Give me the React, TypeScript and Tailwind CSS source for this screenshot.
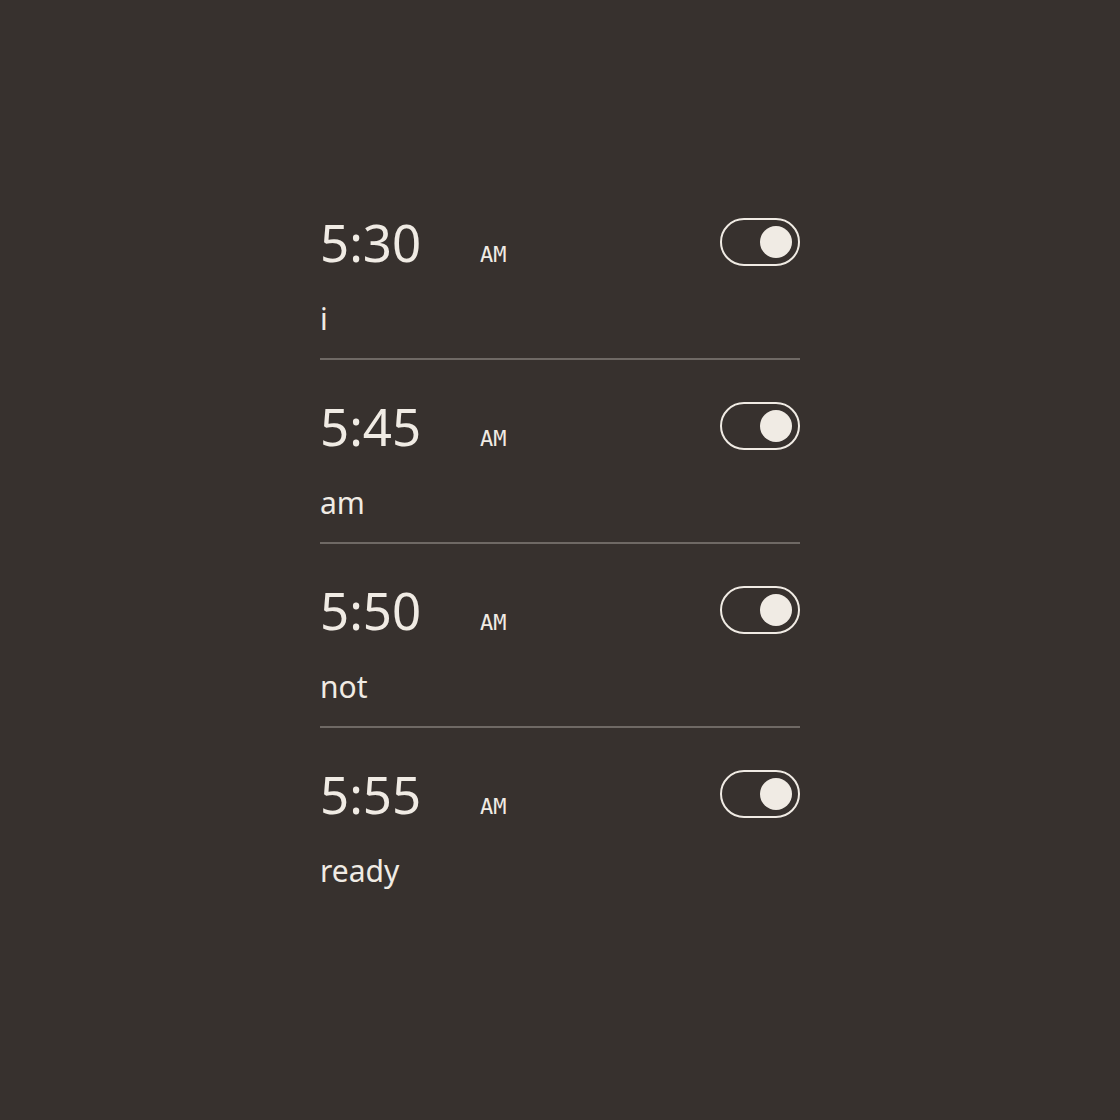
import React from "react";

const alarms = [
  { time: "5:30", label: "i" },
  { time: "5:45", label: "am" },
  { time: "5:50", label: "not" },
  { time: "5:55", label: "ready" },
];

function Toggle() {
  return (
    <div className="w-[80px] h-[48px] rounded-full border-2 border-[#f0ebe4] flex items-center justify-end pr-[6px]">
      <div className="w-[32px] h-[32px] rounded-full bg-[#f0ebe4]" />
    </div>
  );
}

export default function App() {
  return (
    <div className="min-h-[1120px] w-full bg-[#37312e] pt-[176px] flex justify-center">
      <div className="w-[480px] flex flex-col">
        {alarms.map((a, i) => (
          <div
            key={i}
            className={
              "flex flex-col pt-[42px] " +
              (i < alarms.length - 1 ? "pb-[19px] border-b-2 border-[#6f6965]" : "")
            }
          >
            <div className="flex items-center h-[48px]">
              <div className="flex items-baseline text-[#f0ebe4]">
                <span className="w-[160px] text-[51px] leading-none [font-family:'Noto_Sans',sans-serif]">
                  {a.time}
                </span>
                <span className="text-[22px] leading-none [font-family:'DejaVu_Sans_Mono',monospace]">
                  AM
                </span>
              </div>
              <div className="ml-auto">
                <Toggle />
              </div>
            </div>
            <div className="mt-[33px] text-[30px] leading-[40px] text-[#f0ebe4] [font-family:'Noto_Sans',sans-serif]">
              {a.label}
            </div>
          </div>
        ))}
      </div>
    </div>
  );
}
